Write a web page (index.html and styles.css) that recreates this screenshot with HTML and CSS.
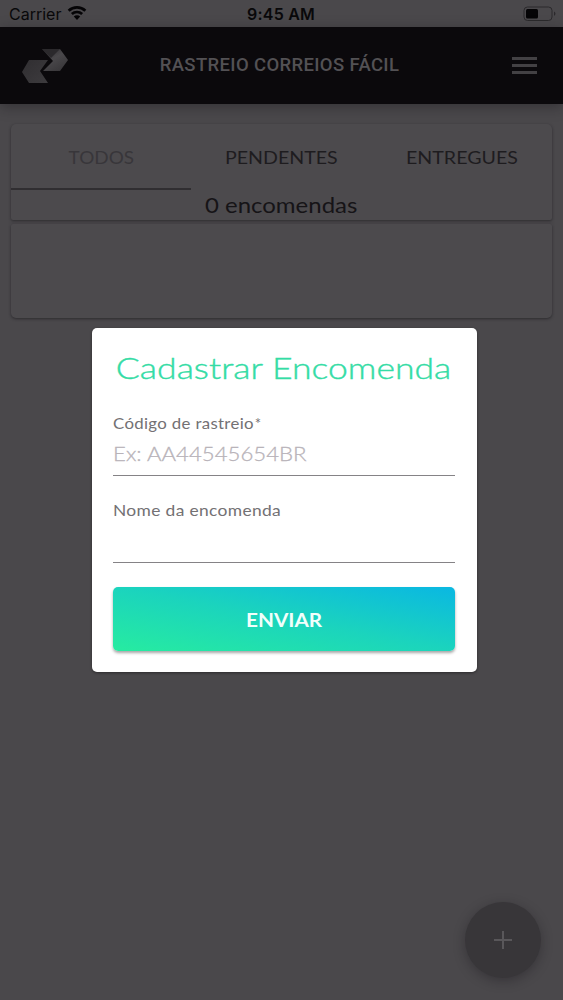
FILE: index.html
```html
<!DOCTYPE html>
<html lang="pt-BR">
<head>
<meta charset="utf-8">
<meta name="viewport" content="width=device-width, initial-scale=1">
<title>Rastreio Correios Fácil</title>
<link rel="stylesheet" href="styles.css">
</head>
<body>
<div class="app">
  <div class="status">
    <div class="carrier"><span>Carrier</span>
      <svg class="wifi" width="20" height="16" viewBox="0 0 20 16"><path d="M0.7 4.8A13.5 13.5 0 0 1 19.3 4.8L17.4 6.8A10.7 10.7 0 0 0 2.6 6.8ZM3.9 8.1A8.8 8.8 0 0 1 16.1 8.1L14.2 10A6.1 6.1 0 0 0 5.8 10ZM6.8 11.6A4.4 4.4 0 0 1 13.2 11.6L10 15Z"/></svg>
    </div>
    <div class="clock">9:45 AM</div>
    <svg class="battery" width="34" height="16" viewBox="0 0 34 16"><rect x="1" y="1" width="28" height="13.5" rx="3.5" fill="none" stroke="#2b292c"/><rect x="3" y="3" width="12" height="9.5" rx="1.5" fill="#050406"/><path d="M31 5.5Q34 7.5 31 10Z" fill="#2b292c"/></svg>
  </div>
  <header class="header">
    <svg class="logo" width="48" height="38" viewBox="0 0 48 38">
      <defs>
        <linearGradient id="a" x1="0" y1="0" x2="0.7" y2="1"><stop offset="0" stop-color="#29272a"/><stop offset=".5" stop-color="#4a484b"/><stop offset="1" stop-color="#39373a"/></linearGradient>
        <linearGradient id="b" x1="0" y1="0" x2="1" y2="1"><stop offset="0" stop-color="#302e31"/><stop offset="1" stop-color="#3d3b3e"/></linearGradient>
      </defs>
      <path d="M20 2H38L46 13L38 24H21L31 14Z" fill="url(#a)"/>
      <path d="M20 2H38L29 11Z" fill="#2b292c"/>
      <path d="M7 13H26L18 24L26 36H7L0 25Z" fill="url(#b)"/>
    </svg>
    <h1 class="app-title"><span>RASTREIO CORREIOS FÁCIL</span></h1>
    <div class="menu"><i></i><i></i><i></i></div>
  </header>
  <main class="content">
    <section class="tabs-card">
      <nav class="tabs">
        <div class="tab active"><span class="t1">TODOS</span></div>
        <div class="tab"><span class="t2">PENDENTES</span></div>
        <div class="tab"><span class="t3">ENTREGUES</span></div>
      </nav>
      <div class="count"><span>0 encomendas</span></div>
    </section>
    <section class="list-card"></section>
  </main>
  <div class="fab"><svg width="18" height="18" viewBox="0 0 18 18"><path d="M9 0V18M0 9H18" stroke="#59575a" stroke-width="2"/></svg></div>
  <div class="overlay">
    <form class="dialog">
      <h2 class="title"><span>Cadastrar Encomenda</span></h2>
      <div class="field"><div class="label"><span class="l1">Código de rastreio</span><span class="star">*</span></div><div class="input"><span>Ex: AA44545654BR</span></div></div>
      <div class="field second"><div class="label"><span class="l2">Nome da encomenda</span></div><div class="input"></div></div>
      <div class="send"><span>ENVIAR</span></div>
    </form>
  </div>
</div>
</body>
</html>
```
FILE: styles.css
```css
* { box-sizing: border-box; }
body { margin: 0; font-family: Lato, "Open Sans", sans-serif; }
.app { position: relative; width: 563px; height: 1000px; overflow: hidden; background: #4a484b; display: flex; flex-direction: column; }
span { display: inline-block; white-space: nowrap; }
.status { height: 27px; display: grid; grid-template-columns: 1fr 80px 1fr; align-items: center; color: #09080a; font-family: Inter, sans-serif; font-size: 16px; line-height: 26px; padding: 1px 6px 0 9px; }
.carrier { display: flex; align-items: center; gap: 6px; }
.wifi { margin-top: -3px; fill: #050406; }
.clock { font-weight: 600; white-space: nowrap; text-align: center; letter-spacing: 0.2px; margin-left: -4px; }
.battery { justify-self: end; margin-top: -1px; }
.header { height: 77px; background: #0b090c; display: grid; grid-template-columns: 60px 1fr 60px; align-items: center; padding: 0 26px 0 22px; box-shadow: 0 3px 12px rgba(20, 18, 22, 0.4); }
.app-title { margin: 0; font: 500 18.5px/24px Roboto, sans-serif; color: #535154; text-align: center; letter-spacing: 0.35px; padding-bottom: 2px; }
.menu { display: flex; flex-direction: column; gap: 4px; width: 25px; justify-self: end; }
.menu i { height: 3px; background: #434144; }
.content { padding: 20px 11px 0; display: flex; flex-direction: column; gap: 4px; }
.tabs-card, .list-card { background: #4c4a4d; box-shadow: 0 1px 3px rgba(25, 23, 27, 0.6); }
.tabs-card { height: 96px; border-radius: 5px 5px 2px 2px; }
.list-card { height: 94px; border-radius: 2px 2px 5px 5px; }
.tabs { display: grid; grid-template-columns: repeat(3, 1fr); height: 66px; }
.tab { display: flex; align-items: center; justify-content: center; font-size: 17.5px; color: #1e1c1f; }
.tab.active { color: #38363a; border-bottom: 2px solid #302e31; padding-top: 2px; }
.count { text-align: center; height: 30px; font-size: 20.5px; line-height: 30px; color: #161417; }
.fab { position: absolute; left: 465px; top: 902px; width: 76px; height: 76px; border-radius: 50%; background: #383639; display: flex; align-items: center; justify-content: center; box-shadow: 0 3px 12px rgba(20, 18, 22, 0.35); }
.overlay { position: absolute; inset: 0; display: flex; align-items: flex-start; padding: 328px 0 0 92px; }
.dialog { width: 385px; height: 344px; border-radius: 5px; background: #fff; padding: 18px 22px 0 21px; box-shadow: 0 1px 3px rgba(0, 0, 0, 0.4); }
.title { margin: 0 0 21px; height: 43px; font-size: 30px; font-weight: 300; line-height: 43px; color: #34dca5; text-align: center; -webkit-text-stroke: 0.4px #34dca5; }
.field { height: 66px; border-bottom: 1.5px solid #858386; }
.second { margin-top: 21px; }
.label { height: 24px; font-size: 15px; line-height: 26px; color: #737174; display: flex; letter-spacing: 0.3px; }
.input { height: 38px; line-height: 38px; font-size: 20px; font-weight: 300; color: #b8b3b9; -webkit-text-stroke: 0.3px #b8b3b9; }
.label span, .input span { transform-origin: left center; }
.star { margin-left: 16px; }
.send { margin-top: 24px; height: 64px; border-radius: 5px; background: linear-gradient(to top right, #26eaa2 3%, #1bd4bd 50%, #0bb9e0 97%); color: #f1fffb; display: flex; align-items: center; justify-content: center; font-size: 18px; font-weight: 700; line-height: 24px; box-shadow: 0 2px 3px rgba(0, 0, 0, 0.35); }
.title span { transform: scaleX(1.185); }
.send span { transform: scaleX(1.15); padding-top: 2px; }
.count span { transform: scaleX(1.17); }
.t1 { transform: scaleX(1.08); }
.t2, .t3 { transform: scaleX(1.12); }
.label .l2 { transform: scaleX(1.16); }
.label .l1 { transform: scaleX(1.12); }
.input span { transform: scaleX(1.11); }
```
